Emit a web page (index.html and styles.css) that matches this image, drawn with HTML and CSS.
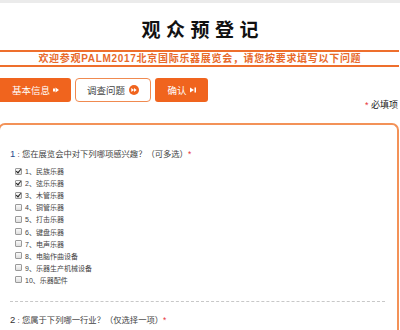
FILE: index.html
```html
<!DOCTYPE html>
<html lang="zh-CN">
<head>
<meta charset="utf-8">
<title>观众预登记</title>
<link rel="stylesheet" href="styles.css">
</head>
<body>
<div class="topbar"></div>
<h1 class="title">观众预登记</h1>
<div class="subtitle">欢迎参观PALM2017北京国际乐器展览会，请您按要求填写以下问题</div>
<div class="tabs">
  <a class="tab tab-fill tab-1">基本信息
    <svg class="ico" width="6" height="6" viewBox="0 0 6 6"><rect x="0" y="1.5" width="2" height="3" fill="#fff"/><path d="M2.5 0.5 L6 3 L2.5 5.5 Z" fill="#fff"/></svg>
  </a>
  <a class="tab tab-line tab-2">调查问题
    <svg class="ico" width="10" height="10" viewBox="0 0 10 10"><circle cx="5" cy="5" r="5" fill="#f0641e"/><path d="M2.3 3 L5 5 L2.3 7 Z M5 3 L7.7 5 L5 7 Z" fill="#fff"/></svg>
  </a>
  <a class="tab tab-fill tab-3">确认
    <svg class="ico" width="6" height="6" viewBox="0 0 6 6"><path d="M0 0.5 L4 3 L0 5.5 Z" fill="#fff"/><rect x="4.5" y="0.5" width="1.5" height="5" fill="#fff"/></svg>
  </a>
  <span class="required"><span class="star">*</span> 必填项</span>
</div>
<div class="card">
  <div class="question"><span class="qnum">1</span><span class="colon"> : </span>您在展览会中对下列哪项感兴趣？（可多选）<span class="star">*</span></div>
  <ul class="options">
    <li><span class="cb checked"></span>1、民族乐器</li>
    <li><span class="cb checked"></span>2、弦乐乐器</li>
    <li><span class="cb checked"></span>3、木管乐器</li>
    <li><span class="cb"></span>4、铜管乐器</li>
    <li><span class="cb"></span>5、打击乐器</li>
    <li><span class="cb"></span>6、键盘乐器</li>
    <li><span class="cb"></span>7、电声乐器</li>
    <li><span class="cb"></span>8、电脑作曲设备</li>
    <li><span class="cb"></span>9、乐器生产机械设备</li>
    <li><span class="cb"></span>10、乐器配件</li>
  </ul>
  <div class="sep"></div>
  <div class="question"><span class="qnum2">2</span><span class="colon"> : </span>您属于下列哪一行业？（仅选择一项）<span class="star">*</span></div>
</div>
</body>
</html>
```

FILE: styles.css
```css
* { box-sizing: border-box; }
html, body { margin: 0; padding: 0; background: #fff; overflow: hidden; }
body {
  font-family: "Liberation Sans", "Noto Sans CJK SC", sans-serif;
  color: #333;
  width: 400px;
  height: 330px;
}
.topbar { height: 3px; background: #ebebeb; }
.title {
  margin: 0;
  height: 47px;
  padding-top: 5px;
  line-height: 42px;
  text-align: center;
  font-family: "Noto Sans CJK SC", sans-serif;
  font-size: 19px;
  font-weight: 700;
  letter-spacing: 5.5px;
  padding-left: 5.5px;
  color: #111;
}
.subtitle {
  border-top: 2px solid #ee6f2d;
  border-bottom: 2px solid #ee6f2d;
  width: 399px;
  height: 17px;
  line-height: 13px;
  text-align: center;
  font-family: "Liberation Sans", "Noto Sans CJK SC", sans-serif;
  font-size: 10px;
  font-weight: 700;
  letter-spacing: 0.7px;
  padding-left: 0.7px;
  color: #e8692a;
}
.tabs {
  display: flex;
  gap: 3px;
  margin-top: 11px;
  height: 24px;
  padding-right: 2px;
}
.tab {
  display: flex;
  align-items: center;
  justify-content: center;
  gap: 3px;
  height: 24px;
  border-radius: 3px;
  font-size: 9.5px;
  text-decoration: none;
}
.tab-fill { background: #f0641e; color: #fff; }
.tab-line { background: #fff; color: #444; border: 1px solid #f08a50; border-radius: 4px; margin-left: 1px; }
.tab-1 { width: 71px; border-radius: 0 3px 3px 0; }
.tab-2 { width: 76px; gap: 4px; }
.tab-3 { width: 53px; margin-left: 1px; }
.required {
  margin-left: auto;
  align-self: flex-end;
  margin-bottom: -9px;
  font-size: 9px;
  line-height: 12px;
  color: #222;
}
.star { color: #e8343a; }
.card {
  margin-top: 21px;
  margin-left: -2px;
  width: 401px;
  height: 220px;
  border: 2px solid #f39258;
  border-bottom: none;
  border-radius: 7px 7px 0 0;
  padding: 23px 0 0 10px;
}
.question {
  font-size: 8.3px;
  line-height: 12px;
  color: #444;
}
.colon { font-size: 8px; }
.qnum { color: #2b4d8c; font-size: 9.5px; }
.qnum2 { color: #333; font-size: 9.5px; }
.options {
  list-style: none;
  margin: 4px 0 0 0;
  padding: 0 0 0 5px;
}
.options li {
  display: flex;
  align-items: center;
  height: 12.1px;
  font-size: 7px;
  color: #444;
}
.cb {
  width: 7px;
  height: 7px;
  margin-right: 3px;
  border: 1px solid #9a9a9a;
  border-radius: 1px;
  background: linear-gradient(#fafafa, #dedede);
  position: relative;
}
.cb.checked::after {
  content: "";
  position: absolute;
  left: 1px;
  top: -1px;
  width: 2px;
  height: 4px;
  border-right: 1.3px solid #222;
  border-bottom: 1.3px solid #222;
  transform: rotate(40deg);
}
.sep {
  margin: 15px 0 12px 0;
  width: 375px;
  border-top: 1px dashed #c8c8c8;
}
```
